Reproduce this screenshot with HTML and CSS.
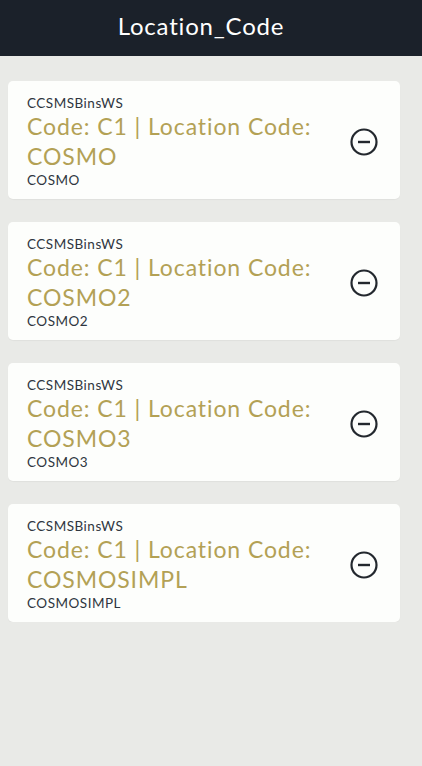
FILE: index.html
```html
<!DOCTYPE html>
<html lang="en">
<head>
    <meta charset="UTF-8">
    <meta name="viewport" content="width=device-width, initial-scale=1.0">
    <title>Location_Code</title>
    <link rel="stylesheet" href="styles.css">
</head>
<body>
    <div class="header">Location_Code</div>

    <div class="list">
        <div class="card">
            <div class="info">
                <div class="source">CCSMSBinsWS</div>
                <div class="title">Code: C1 | Location Code: COSMO</div>
                <div class="sub">COSMO</div>
            </div>
            <svg class="remove" width="30" height="30" viewBox="0 0 30 30">
                <circle cx="15" cy="15" r="12.5" fill="none" stroke="#23282e" stroke-width="2.2"/>
                <line x1="9" y1="15" x2="21" y2="15" stroke="#23282e" stroke-width="2.4"/>
            </svg>
        </div>
        <div class="card">
            <div class="info">
                <div class="source">CCSMSBinsWS</div>
                <div class="title">Code: C1 | Location Code: COSMO2</div>
                <div class="sub">COSMO2</div>
            </div>
            <svg class="remove" width="30" height="30" viewBox="0 0 30 30">
                <circle cx="15" cy="15" r="12.5" fill="none" stroke="#23282e" stroke-width="2.2"/>
                <line x1="9" y1="15" x2="21" y2="15" stroke="#23282e" stroke-width="2.4"/>
            </svg>
        </div>
        <div class="card">
            <div class="info">
                <div class="source">CCSMSBinsWS</div>
                <div class="title">Code: C1 | Location Code: COSMO3</div>
                <div class="sub">COSMO3</div>
            </div>
            <svg class="remove" width="30" height="30" viewBox="0 0 30 30">
                <circle cx="15" cy="15" r="12.5" fill="none" stroke="#23282e" stroke-width="2.2"/>
                <line x1="9" y1="15" x2="21" y2="15" stroke="#23282e" stroke-width="2.4"/>
            </svg>
        </div>
        <div class="card">
            <div class="info">
                <div class="source">CCSMSBinsWS</div>
                <div class="title">Code: C1 | Location Code: COSMOSIMPL</div>
                <div class="sub">COSMOSIMPL</div>
            </div>
            <svg class="remove" width="30" height="30" viewBox="0 0 30 30">
                <circle cx="15" cy="15" r="12.5" fill="none" stroke="#23282e" stroke-width="2.2"/>
                <line x1="9" y1="15" x2="21" y2="15" stroke="#23282e" stroke-width="2.4"/>
            </svg>
        </div>
    </div>
</body>
</html>
```

FILE: styles.css
```css
body {
    font-family: Lato, "Noto Sans", sans-serif;
    background-color: #e9eae7;
    margin: 0;
    padding: 0;
}

.header {
    height: 56px;
    background-color: #1b212a;
    color: #fff;
    font-size: 24px;
    line-height: 52px;
    text-align: center;
    letter-spacing: 0.8px;
    padding-right: 20px;
}

.list {
    display: flex;
    flex-direction: column;
    gap: 23px;
    padding: 25px 22px 0 8px;
}

.card {
    display: flex;
    align-items: center;
    background-color: #fdfefc;
    border-radius: 5px;
    padding: 14px 21px 11px 19px;
    box-shadow: 0 1px 1px rgba(0, 0, 0, 0.04);
}

.info {
    flex: 1;
    padding-right: 10px;
}

.source {
    font-size: 13.5px;
    line-height: 16px;
    color: #2f3640;
    letter-spacing: 0.5px;
}

.title {
    font-size: 23px;
    line-height: 30px;
    color: #b3a155;
    letter-spacing: 0.9px;
    max-width: 300px;
}

.sub {
    font-size: 13.5px;
    line-height: 16px;
    color: #2f3640;
    letter-spacing: 0.5px;
    margin-top: 1px;
}

.remove {
    flex-shrink: 0;
}
```
